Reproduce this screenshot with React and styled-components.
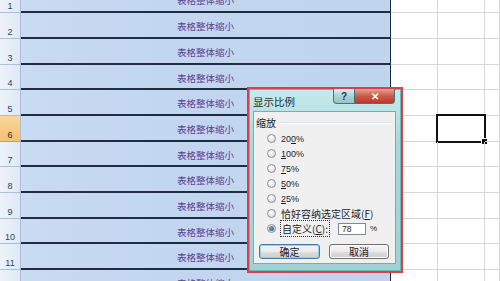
import React from "react";
import styled, { createGlobalStyle, css } from "styled-components";

const Global = createGlobalStyle`
  html, body { margin: 0; padding: 0; background: #fff; overflow: hidden; }
  body { font-family: "Liberation Sans", "Noto Sans CJK SC", sans-serif; }
`;

const Page = styled.div`
  position: relative;
  width: 500px;
  height: 281px;
  overflow: hidden;
  background: #fff;
`;

const Sheet = styled.div`
  display: flex;
  flex-direction: column;
  margin-top: -12.4px;
`;

const Row = styled.div`
  display: grid;
  grid-template-columns: 21px 370px 47px 47px 1fr;
  height: 25.7px;
`;

const RowHead = styled.div`
  box-sizing: border-box;
  display: flex;
  align-items: flex-end;
  justify-content: center;
  padding-bottom: 1px;
  font: 9px/9px "Liberation Sans", sans-serif;
  color: #2c4566;
  border-right: 1px solid #a9bfd6;
  border-bottom: 1px solid #a9bfd6;
  background: linear-gradient(to right, #eef3fa, #dfe8f4);
  ${(p) =>
    p.$active &&
    css`
      background: linear-gradient(to bottom, #fbd79c, #f6bf6e);
      color: #3b3020;
      border-bottom-color: #d79b4a;
    `}
`;

const BlueCell = styled.div`
  box-sizing: border-box;
  display: flex;
  align-items: center;
  justify-content: center;
  padding-top: 2px;
  background: linear-gradient(to right, #c9dbf2, #c2d6ef 40%, #c0d4ee);
  border-bottom: 2px solid #1e2c44;
  border-right: 1px solid #1e2c44;
  color: #5f3f93;
  font: 9.5px "Noto Sans CJK SC", sans-serif;
`;

const Cell = styled.div`
  position: relative;
  box-sizing: border-box;
  border-bottom: 1px solid #d6d6d6;
  border-right: 1px solid #d6d6d6;
  ${(p) =>
    p.$selected &&
    css`
      &::before {
        content: "";
        position: absolute;
        left: -2px;
        top: -2px;
        right: -2px;
        bottom: -2px;
        border: 2.5px solid #111;
      }
      &::after {
        content: "";
        position: absolute;
        right: -4px;
        bottom: -4px;
        width: 5px;
        height: 5px;
        background: #111;
        border: 1px solid #fff;
      }
    `}
`;

/* ---------- Dialog ---------- */

const Dialog = styled.div`
  position: absolute;
  left: 247px;
  top: 87px;
  width: 156px;
  height: 186px;
  box-sizing: border-box;
  border: 2px solid #d8404d;
  background: linear-gradient(to bottom, #c7eaeb, #a9d8da 30%, #9fd2d4);
  padding: 0 5px 7px 4px;
  display: flex;
  flex-direction: column;
  box-shadow: inset 0 0 0 1px #6fb3b7;
`;

const TitleBar = styled.div`
  height: 22px;
  display: flex;
  align-items: flex-start;
  justify-content: space-between;
`;

const Title = styled.div`
  padding-top: 5px;
  font: 10.5px "Noto Sans CJK SC", sans-serif;
  color: #1d2a30;
`;

const TitleButtons = styled.div`
  display: flex;
  margin-right: 1px;
`;

const TitleBtn = styled.div`
  height: 15px;
  box-sizing: border-box;
  display: flex;
  align-items: center;
  justify-content: center;
  border: 1px solid #4f6f74;
  border-top: none;
  font: bold 10px "Liberation Sans", sans-serif;
  ${(p) =>
    p.$close
      ? css`
          width: 40px;
          border-left: none;
          border-bottom-right-radius: 4px;
          background: linear-gradient(to bottom, #e8a194, #cf5a48 50%, #b9382a);
          color: #fff;
        `
      : css`
          width: 22px;
          border-bottom-left-radius: 4px;
          background: linear-gradient(to bottom, #d9f0f0, #a9d3d5 50%, #93c6c8);
          color: #1f3a48;
        `}
`;

const Panel = styled.div`
  flex: 1;
  box-sizing: border-box;
  background: #f0f0f0;
  border: 1px solid #7fa9ad;
  padding: 5px 3px 3px 2px;
  display: flex;
  flex-direction: column;
`;

const GroupHead = styled.div`
  display: flex;
  align-items: center;
  gap: 3px;
  height: 11px;
  font: 10px "Noto Sans CJK SC", sans-serif;
  color: #222;
  &::after {
    content: "";
    flex: 1;
    height: 1px;
    background: #d5dfe5;
    box-shadow: 0 1px 0 #fff;
  }
`;

const RadioList = styled.div`
  margin-top: 3px;
  display: flex;
  flex-direction: column;
`;

const RadioRow = styled.div`
  height: 15px;
  display: flex;
  align-items: center;
  padding-left: 11px;
  font: 9px "Liberation Sans", "Noto Sans CJK SC", sans-serif;
  color: #1e1e1e;
`;

const RadioDot = styled.span`
  width: 9px;
  height: 9px;
  box-sizing: border-box;
  border-radius: 50%;
  border: 1px solid #8c8f94;
  background: radial-gradient(circle at 40% 35%, #ffffff, #cfd2d6);
  margin-right: 5px;
  display: flex;
  align-items: center;
  justify-content: center;
  ${(p) =>
    p.$on &&
    css`
      &::after {
        content: "";
        width: 5px;
        height: 5px;
        border-radius: 50%;
        background: radial-gradient(circle at 40% 35%, #6aa0d8, #1d4f8a);
      }
    `}
`;

const Label = styled.span`
  font-family: ${(p) => (p.$cjk ? `"Noto Sans CJK SC", sans-serif` : `"Liberation Sans", sans-serif`)};
  font-size: ${(p) => (p.$cjk ? "10px" : "9px")};
  ${(p) =>
    p.$focus &&
    css`
      outline: 1px dotted #333;
      outline-offset: 0px;
      padding: 0 1px;
    `}
`;

const U = styled.span`
  text-decoration: underline;
`;

const NumInput = styled.div`
  margin-left: 9px;
  width: 28px;
  height: 12px;
  box-sizing: border-box;
  border: 1px solid #7a8a96;
  background: #fff;
  font: 8.5px "Liberation Sans", sans-serif;
  padding-left: 3px;
  display: flex;
  align-items: center;
`;

const Percent = styled.span`
  margin-left: 4px;
  font: 8px "Liberation Sans", sans-serif;
`;

const Buttons = styled.div`
  margin-top: 8px;
  display: flex;
  gap: 9px;
  padding-left: 3px;
`;

const Btn = styled.div`
  width: ${(p) => p.$w}px;
  height: 15px;
  box-sizing: border-box;
  border-radius: 3px;
  border: 1px solid ${(p) => (p.$default ? "#3d7fb0" : "#707070")};
  box-shadow: ${(p) => (p.$default ? "inset 0 0 0 1px #8fd0ea" : "inset 0 0 0 1px #fcfcfc")};
  background: linear-gradient(to bottom, #f4f4f4, #ebebeb 50%, #dddddd 51%, #cfcfcf);
  display: flex;
  align-items: center;
  justify-content: center;
  font: 10px "Noto Sans CJK SC", sans-serif;
  color: #1a1a1a;
`;

const rows = Array.from({ length: 12 }, (_, i) => i + 1);

export default function App() {
  return (
    <Page>
      <Global />
      <Sheet>
        {rows.map((n) => (
          <Row key={n}>
            <RowHead $active={n === 6}>{n}</RowHead>
            <BlueCell>表格整体缩小</BlueCell>
            <Cell />
            <Cell $selected={n === 6} />
            <Cell />
          </Row>
        ))}
      </Sheet>

      <Dialog>
        <TitleBar>
          <Title>显示比例</Title>
          <TitleButtons>
            <TitleBtn>?</TitleBtn>
            <TitleBtn $close>✕</TitleBtn>
          </TitleButtons>
        </TitleBar>
        <Panel>
          <GroupHead>缩放</GroupHead>
          <RadioList>
            <RadioRow>
              <RadioDot />
              <Label>20<U>0</U>%</Label>
            </RadioRow>
            <RadioRow>
              <RadioDot />
              <Label><U>1</U>00%</Label>
            </RadioRow>
            <RadioRow>
              <RadioDot />
              <Label><U>7</U>5%</Label>
            </RadioRow>
            <RadioRow>
              <RadioDot />
              <Label><U>5</U>0%</Label>
            </RadioRow>
            <RadioRow>
              <RadioDot />
              <Label><U>2</U>5%</Label>
            </RadioRow>
            <RadioRow>
              <RadioDot />
              <Label $cjk>恰好容纳选定区域(<U>F</U>)</Label>
            </RadioRow>
            <RadioRow>
              <RadioDot $on />
              <Label $cjk $focus>自定义(<U>C</U>):</Label>
              <NumInput>78</NumInput>
              <Percent>%</Percent>
            </RadioRow>
          </RadioList>
          <Buttons>
            <Btn $w={61} $default>确定</Btn>
            <Btn $w={60}>取消</Btn>
          </Buttons>
        </Panel>
      </Dialog>
    </Page>
  );
}
